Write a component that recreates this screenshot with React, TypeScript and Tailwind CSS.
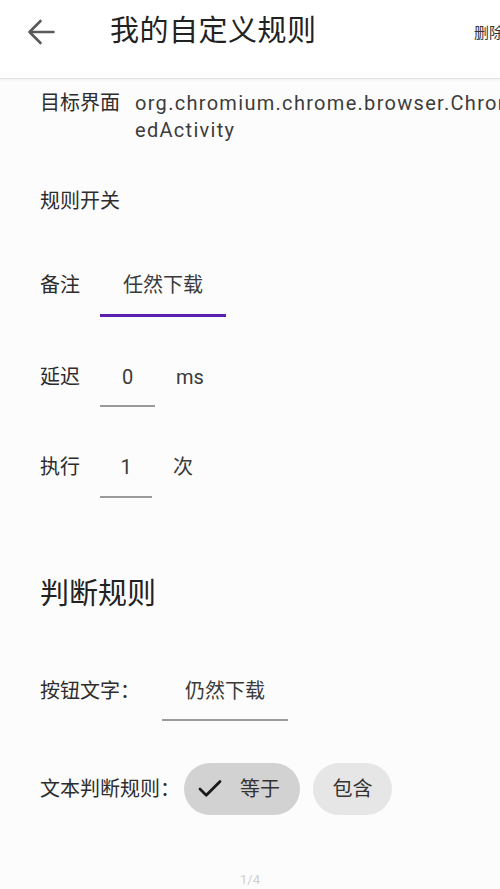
import { Check } from 'lucide-react'

function Field({ value, width, active, gap }: { value: string; width: string; active?: boolean; gap: string }) {
  return (
    <div className={`flex flex-col items-center ${width}`}>
      <div className="h-[44px] flex items-center text-[20px] text-[#3a3a3a]">{value}</div>
      <div className={`${gap} ${active ? 'h-[3px] bg-[#5b1fb0]' : 'h-[2px] bg-[#9a9a9a]'} w-full`} />
    </div>
  )
}

export default function App() {
  return (
    <div className="w-[500px] h-[889px] overflow-hidden bg-[#fcfcfc] flex flex-col font-['Roboto','Noto_Sans_CJK_SC',sans-serif]">
      <header className="h-[79px] shrink-0 pb-[15px] bg-white border-b border-[#e2e2e2] shadow-[0_1px_3px_rgba(0,0,0,0.06)] flex items-center relative">
        <svg className="ml-[27px] w-[28px] h-[26px] text-[#5a5a5a]" viewBox="0 0 28 26" fill="none" stroke="currentColor" strokeWidth="2.6" strokeLinecap="round" strokeLinejoin="round">
          <path d="M26.5 13H2.5M13.5 2L2.5 13l11 11" />
        </svg>
        <h1 className="ml-[55px] text-[29px] leading-none text-[#222] tracking-[0.5px]">我的自定义规则</h1>
        <span className="absolute left-[474px] top-[22px] text-[15px] text-[#333] whitespace-nowrap">删除</span>
      </header>

      <div className="flex-1 flex flex-col pl-[40px] text-[#2d2d2d]">
        <div className="mt-[11px] flex leading-[27px]">
          <span className="w-[95px] shrink-0 text-[20px]">目标界面</span>
          <span className="whitespace-nowrap text-[20px] tracking-[1.3px] text-[#3c3c3c]">
            org.chromium.chrome.browser.ChromeTabb
            <br />
            edActivity
          </span>
        </div>

        <div className="mt-[37px] h-[40px] flex items-center text-[20px]">规则开关</div>

        <div className="mt-[42px] flex items-start">
          <span className="w-[60px] h-[44px] flex items-center text-[20px]">备注</span>
          <Field value="任然下载" width="w-[126px]" active gap="mt-[7px]" />
        </div>

        <div className="mt-[38px] flex items-start">
          <span className="w-[60px] h-[44px] flex items-center text-[20px]">延迟</span>
          <Field value="0" width="w-[55px]" gap="mt-[6px]" />
          <span className="ml-[21px] h-[44px] flex items-center text-[20px] text-[#3a3a3a]">ms</span>
        </div>

        <div className="mt-[38px] flex items-start">
          <span className="w-[60px] h-[44px] flex items-center text-[20px]">执行</span>
          <Field value="1" width="w-[52px]" gap="mt-[7px]" />
          <span className="ml-[21px] h-[44px] flex items-center text-[20px] text-[#3a3a3a]">次</span>
        </div>

        <h2 className="mt-[77px] h-[40px] flex items-center text-[29px] text-[#222]">判断规则</h2>

        <div className="mt-[54px] flex items-start">
          <span className="w-[122px] h-[44px] flex items-center text-[20px]">按钮文字：</span>
          <Field value="仍然下载" width="w-[126px]" gap="mt-[6px]" />
        </div>

        <div className="mt-[42px] flex items-center">
          <span className="w-[144px] text-[20px] whitespace-nowrap">文本判断规则：</span>
          <div className="h-[52px] w-[116px] rounded-full bg-[#d2d2d2] flex items-center pl-[11px]">
            <Check className="w-[30px] h-[30px] text-[#1a1a1a]" strokeWidth={2.2} />
            <span className="ml-[15px] text-[20px] text-[#333]">等于</span>
          </div>
          <div className="ml-[13px] h-[52px] w-[79px] rounded-full bg-[#e6e6e6] flex items-center justify-center text-[20px] text-[#333]">
            包含
          </div>
        </div>

        <div className="mt-auto -ml-[40px] text-center text-[13px] text-[#cfcfcf]">1/4</div>
      </div>
    </div>
  )
}
